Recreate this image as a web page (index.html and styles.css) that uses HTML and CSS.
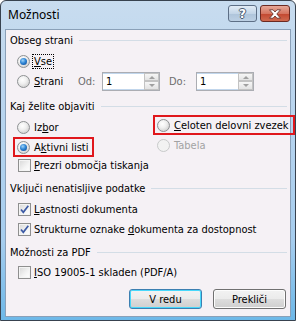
FILE: index.html
```html
<!DOCTYPE html>
<html lang="sl">
<head>
  <meta charset="UTF-8">
  <title>Možnosti</title>
  <link rel="stylesheet" href="styles.css">
</head>
<body>
  <div class="window">
    <div class="titlebar">
      <span class="title">Možnosti</span>
      <div class="caption">
        <span class="cbtn help">?</span>
        <span class="cbtn close">
          <svg width="14" height="10" viewBox="0 0 14 10">
            <path d="M1.5 0.8 L5 0.8 L7 3 L9 0.8 L12.5 0.8 L8.8 5 L12.5 9.2 L9 9.2 L7 7 L5 9.2 L1.5 9.2 L5.2 5 Z" fill="#fff" stroke="#5a2a24" stroke-width="0.8"/>
          </svg>
        </span>
      </div>
    </div>

    <div class="client">
      <div class="head"><span>Obseg strani</span><i></i></div>
      <div class="row r-vse">
        <span class="radio on"></span>
        <span class="focus"><u>V</u>se</span>
      </div>
      <div class="row r-strani">
        <span class="radio"></span>
        <span class="lbl-strani"><u>S</u>trani</span>
        <span class="dim od">Od:</span>
        <span class="spin"><span class="val">1</span><span class="arrows"><b class="up"></b><b class="down"></b></span></span>
        <span class="dim do">Do:</span>
        <span class="spin"><span class="val">1</span><span class="arrows"><b class="up"></b><b class="down"></b></span></span>
      </div>

      <div class="head h2"><span>Kaj želite objaviti</span><i></i></div>
      <div class="cols">
        <div class="col-left">
          <div class="row"><span class="radio"></span><span>Iz<u>b</u>or</span></div>
          <div class="row"><span class="mark m-aktivni"><span class="radio on"></span><span>A<u>k</u>tivni listi</span></span></div>
          <div class="row r-prezri"><span class="check"></span><span><u>P</u>rezri območja tiskanja</span></div>
        </div>
        <div class="col-right">
          <div class="row"><span class="mark m-celoten"><span class="radio"></span><span><u>C</u>eloten delovni zvezek</span></span></div>
          <div class="row disabled"><span class="radio"></span><span>Tabela</span></div>
        </div>
      </div>

      <div class="head h3"><span>Vključi nenatisljive podatke</span><i></i></div>
      <div class="row r-last"><span class="check on"><svg width="11" height="11" viewBox="0 0 11 11"><path d="M2 5.5 L4.3 8.3 L9.3 1.8" fill="none" stroke="#3d5aa5" stroke-width="1.7"/></svg></span><span><u>L</u>astnosti dokumenta</span></div>
      <div class="row"><span class="check on"><svg width="11" height="11" viewBox="0 0 11 11"><path d="M2 5.5 L4.3 8.3 L9.3 1.8" fill="none" stroke="#3d5aa5" stroke-width="1.7"/></svg></span><span>Strukturne oznake <u>d</u>okumenta za dostopnost</span></div>

      <div class="head h4"><span>Možnosti za PDF</span><i></i></div>
      <div class="row"><span class="check"></span><span><u>I</u>SO 19005-1 skladen (PDF/A)</span></div>

      <div class="buttons">
        <button class="btn default">V redu</button>
        <button class="btn">Prekliči</button>
      </div>
    </div>
  </div>
</body>
</html>
```

FILE: styles.css
```css
body { margin: 0; background: #fff; font-family: "DejaVu Sans Condensed", "Liberation Sans", sans-serif; font-size: 11px; color: #000; }

.window {
  width: 296px;
  height: 321px;
  box-sizing: border-box;
  border: 1px solid #38424f;
  border-radius: 6px 6px 0 0;
  background: linear-gradient(#c8dcef, #bad5ee 30%, #a6cdee 75%, #6db8e8);
  padding: 0 4px 3px 4px;
  display: flex;
  flex-direction: column;
}

/* title bar */
.titlebar { height: 28px; display: flex; align-items: flex-start; }
.title { font-family: "Noto Sans", sans-serif; font-size: 12px; margin: 5px 0 0 3px; }
.caption { margin: 4px 1px 0 auto; display: flex; gap: 3px; }
.cbtn {
  width: 27px;
  height: 15px;
  border: 1px solid #5d6f86;
  border-radius: 3px;
  display: flex;
  align-items: center;
  justify-content: center;
}
.help {
  background: linear-gradient(#e2ecf6, #c3d5e7 50%, #aec4da 51%, #bcd0e4);
  color: #fff;
  font: bold 12px "DejaVu Sans", sans-serif;
  text-shadow: 0 0 1px #4c5d72, 1px 0 0 #4c5d72, -1px 0 0 #4c5d72, 0 1px 0 #4c5d72, 0 -1px 0 #4c5d72;
}
.close {
  width: 28px;
  border-color: #6b2a22;
  background: linear-gradient(#e6a797, #d57560 50%, #c2462f 51%, #cf6a4f);
}

/* client area */
.client {
  flex: 1;
  border: 1px solid #8aa0b8;
  background: #f5f1f5;
  display: flex;
  flex-direction: column;
}

.head { height: 20px; display: flex; align-items: center; padding: 0 3px 0 4px; }
.head i { flex: 1; height: 1px; background: #d3dde6; margin-left: 6px; }
.h2 { margin-top: 5px; }
.h3 { margin-top: 3px; }
.h4 { margin-top: 3px; }

.row { height: 20px; display: flex; align-items: center; padding-left: 11px; gap: 4px; white-space: nowrap; }
.r-vse { margin-top: 1px; }
.r-prezri { margin-top: -2px; }
.r-last { margin-top: 1px; }
.row .check { margin-left: 1px; margin-right: -1px; }

.focus { outline: 1px dotted #000; outline-offset: 0; padding: 0 1px; margin-left: -1px; }

/* radio */
.radio {
  width: 11px;
  height: 11px;
  border-radius: 50%;
  border: 1px solid #8e9193;
  background: radial-gradient(circle at 40% 35%, #fff, #f0f0f0 40%, #c9c9c9 90%);
  flex: none;
  position: relative;
}
.radio.on::after {
  content: "";
  position: absolute;
  left: 2px;
  top: 2px;
  width: 7px;
  height: 7px;
  border-radius: 50%;
  background: radial-gradient(circle at 40% 35%, #9ed3f8, #2f86d6 45%, #0e4a96 90%);
}
.disabled { color: #a3a3a3; }
.disabled .radio { border-color: #c8caca; background: #f2f2f2; }

/* checkbox */
.check {
  width: 11px;
  height: 11px;
  border: 1px solid #8f8f8f;
  background: linear-gradient(135deg, #d6d6d6, #f4f4f4 60%, #fff);
  box-shadow: inset 0 0 0 1px #f4f4f4;
  flex: none;
  display: flex;
}

/* Strani row */
.lbl-strani { width: 40px; }
.dim { color: #6d6d6d; }
.od { width: 20px; }
.do { width: 23px; margin-left: 5px; }
.spin {
  width: 56px;
  height: 17px;
  border: 1px solid #abadb3;
  background: #fff;
  display: flex;
}
.spin .val { flex: 1; padding-left: 3px; line-height: 17px; box-shadow: inset 0 1px #c1d6ec, inset 0 -1px #c1d6ec; }
.arrows { width: 15px; display: flex; flex-direction: column; }
.arrows b {
  flex: 1;
  border: 1px solid #c3c3c3;
  background: linear-gradient(#f6f6f6, #e3e3e3);
  position: relative;
}
.arrows b::after {
  content: "";
  position: absolute;
  left: 4px;
  border-left: 3px solid transparent;
  border-right: 3px solid transparent;
}
.arrows .up::after { top: 2px; border-bottom: 3px solid #a0a0a0; }
.arrows .down::after { top: 2px; border-top: 3px solid #a0a0a0; }

/* two columns */
.cols { display: flex; align-items: flex-start; }
.col-left { width: 140px; padding-top: 1px; }
.col-right { margin-top: -1px; }
.col-right .row { padding-left: 11px; }

.mark {
  display: flex;
  align-items: center;
  gap: 4px;
  border: 2px solid #e0171c;
  height: 16px;
  padding: 0 4px 0 2px;
  margin-left: -4px;
}
.m-celoten { padding-right: 4px; }

/* buttons */
.buttons { margin-top: 7px; display: flex; justify-content: flex-end; gap: 11px; padding-right: 4px; }
.btn {
  width: 73px;
  height: 20px;
  font: inherit;
  color: #000;
  border: 1px solid #707070;
  border-radius: 3px;
  background: linear-gradient(#f2f2f2, #ebebeb 50%, #dddddd 51%, #cfcfcf);
  box-shadow: inset 0 0 0 1px #fcfcfc;
  padding: 0;
}
.btn.default {
  border-color: #3c7fb1;
  box-shadow: inset 0 0 0 1px #48d8fb;
}
```
